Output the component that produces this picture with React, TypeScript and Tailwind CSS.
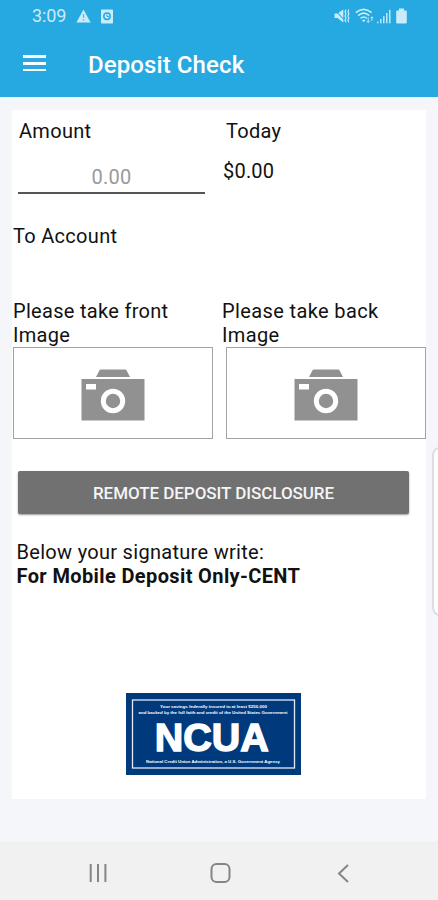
import React, { useState } from 'react'

function StatusBar() {
  return (
    <div className="flex h-8 items-center justify-between pl-8 pr-[31px] text-[#c9ecfb]">
      <div className="flex items-center">
        <span className="w-[44px] text-[18px] leading-8 tracking-[-0.1px]">3:09</span>
        <svg width="15" height="14" viewBox="0 0 15 14" fill="currentColor">
          <path d="M7.5 0.5 14.6 13.5H0.4Z" />
          <path d="M6.8 5h1.5v4H6.8zM6.8 10.2h1.5v1.5H6.8z" fill="#5fbfe8" />
        </svg>
        <svg className="ml-[10px]" width="12" height="15" viewBox="0 0 12 15">
          <rect x="0" y="0.5" width="12" height="14" rx="0.8" fill="currentColor" />
          <circle cx="6" cy="7.3" r="3.2" fill="none" stroke="#25a9e0" strokeWidth="1.5" />
          <path d="M6 5.5v2h2" fill="none" stroke="#25a9e0" />
        </svg>
      </div>
      <div className="flex items-center">
        <svg width="16" height="16" viewBox="0 0 16 16" fill="none" stroke="currentColor">
          <path d="M0.5 5.5h3L9.3 1.5v13L3.5 10h-3Z" fill="currentColor" stroke="none" />
          <path d="M0.5 1.5 9.8 11.5" stroke="#25a9e0" strokeWidth="1.1" />
          <path d="m12 1.5-1 2.2 1 2.1-1 2.2 1 2.1-1 2.2 1 2M14.9 1.5l-1 2.2 1 2.1-1 2.2 1 2.1-1 2.2 1 2" strokeWidth="1.2" />
        </svg>
        <svg className="ml-[5px]" width="19" height="16" viewBox="0 0 19 16" fill="none" stroke="currentColor" strokeWidth="1.6">
          <path d="M0.8 4.6Q8.7-2 16.6 4.6M3.2 7.6Q8.7 2.8 14.2 7.6M5.6 10.4Q8.7 7.6 11.8 10.4" />
          <path d="M7 12.3q1.7-1.5 3.4 0l-1.7 2Z" fill="currentColor" stroke="none" />
          <path d="M13.2 9.5v5m-1.5-1.6 1.5 1.6 1.5-1.6M16.9 13V8.8m-1.2 1.4 1.2-1.4 1.2 1.4" strokeWidth="0.9" />
        </svg>
        <svg className="ml-[3px]" width="14" height="15" viewBox="0 0 14 15" fill="currentColor">
          <rect x="0.2" y="12.5" width="1.3" height="1.8" />
          <rect x="3.1" y="10" width="1.4" height="4.3" />
          <rect x="6.1" y="7.2" width="1.4" height="7.1" />
          <rect x="9.1" y="4" width="1.4" height="10.3" />
          <rect x="12.1" y="0.8" width="1.4" height="13.5" />
        </svg>
        <svg className="ml-[5px]" width="11" height="16" viewBox="0 0 11 16" fill="currentColor">
          <path d="M3 0.5h5v2h1.8q1 0 1 1V14.5q0 1-1 1H1.2q-1 0-1-1V3.5q0-1 1-1H3Z" />
        </svg>
      </div>
    </div>
  )
}

function CameraBox() {
  return (
    <button className="flex h-[92px] w-[200px] items-center justify-center border border-[#a3a3a3] bg-white">
      <svg className="mt-[3px]" width="64" height="52" viewBox="0 0 64 52">
        <path d="M20 0.5h24q1 0 1.6 1L49 8H15l3.4-6.5q0.6-1 1.6-1Z" fill="#919191" />
        <rect x="0.5" y="10" width="63" height="41.5" fill="#919191" />
        <rect x="5" y="15" width="10" height="5.5" fill="#fff" />
        <circle cx="32" cy="32" r="9.7" fill="none" stroke="#fff" strokeWidth="5" />
      </svg>
    </button>
  )
}

function NcuaLogo() {
  return (
    <svg width="175" height="82" viewBox="0 0 175 82" className="font-['Liberation_Sans',sans-serif] tracking-normal">
      <rect width="175" height="82" fill="#003a7d" />
      <rect x="6.5" y="7" width="162" height="68" fill="none" stroke="#e3ebf5" strokeWidth="1.3" />
      <g fill="#fff" fontWeight="bold">
        <g fontSize="4.3">
          <text x="34" y="15" textLength="107" lengthAdjust="spacingAndGlyphs">Your savings federally insured to at least $250,000</text>
          <text x="12.5" y="21.2" textLength="149" lengthAdjust="spacingAndGlyphs">and backed by the full faith and credit of the United States Government</text>
          <text x="20" y="69.7" textLength="134" lengthAdjust="spacingAndGlyphs">National Credit Union Administration, a U.S. Government Agency</text>
        </g>
        <text x="28.8" y="57.7" fontSize="38" textLength="114" lengthAdjust="spacingAndGlyphs" stroke="#fff" strokeWidth="1.4">NCUA</text>
      </g>
    </svg>
  )
}

export default function App() {
  const [amount, setAmount] = useState("")
  return (
    <div className="relative flex h-[900px] w-[438px] flex-col overflow-hidden bg-[#f4f6fa] font-[Roboto,sans-serif] text-[20px] leading-6 tracking-[0.3px] text-[#111]">
      <header className="h-[97px] shrink-0 bg-[#25a9e0]">
        <StatusBar />
        <div className="flex h-[65px] items-center pl-[23px]">
          <button aria-label="Menu" className="flex w-[23px] flex-col gap-[4px] pb-[3px]">
            <span className="h-[3px] bg-white"></span>
            <span className="h-[3px] bg-white"></span>
            <span className="h-[2.5px] bg-white"></span>
          </button>
          <h1 className="ml-[42px] text-[24px] font-medium tracking-[0.1px] text-white">Deposit Check</h1>
        </div>
      </header>

      <main className="mx-3 mt-[13px] h-[689px] w-[414px] shrink-0 bg-white pt-[9px]">
        <div className="flex h-[105px]">
          <div className="w-[210px]">
            <div className="pl-[7px]">Amount</div>
            <input
              type="text"
              value={amount}
              onChange={(e) => setAmount(e.target.value)}
              className="ml-[6px] mt-[22px] block h-[29px] w-[187px] border-b-2 border-[#555] pb-[3px] text-center outline-none placeholder:text-[#999]"
              placeholder="0.00" />
          </div>
          <div>
            <div className="pl-1">Today</div>
            <div className="mt-4 pl-px tracking-[0.2px]">$0.00</div>
          </div>
        </div>
        <div className="h-[75px] pl-px">To Account</div>

        <div className="flex">
          <div className="w-[214px] pl-px">
            <p className="w-[170px]">Please take front Image</p>
            <CameraBox />
          </div>
          <div className="w-[200px]">
            <p className="-ml-[4px] w-[170px] tracking-[0.38px]">Please take back Image</p>
            <CameraBox />
          </div>
        </div>

        <button className="ml-[6px] mt-8 block h-[43px] w-[391px] rounded-[2px] bg-[#717171] text-[17px] font-medium tracking-[-0.05px] text-[#f5f5f5] shadow-[0_1px_2px_rgba(0,0,0,0.4)]">
          REMOTE DEPOSIT DISCLOSURE
        </button>

        <div className="mt-[26px] pl-[4.5px]">
          <p>Below your signature write:</p>
          <p className="font-bold tracking-[0.38px]">For Mobile Deposit Only-CENT</p>
        </div>

        <div className="mt-[105px] pl-[114px]">
          <NcuaLogo />
        </div>
      </main>

      {/* edge panel handle */}
      <div className="absolute left-[432px] top-[447px] h-[169px] w-5 rounded-[8px] border-2 border-[#dcdee2] bg-[#fdfdfe]"></div>

      <nav className="mt-auto flex h-[58px] shrink-0 items-center border-t border-[#ebedf0] bg-[#f1f1f1] pl-[88px] pt-[3px]">
        <svg width="20" height="20" viewBox="0 0 20 20" stroke="#858585" strokeWidth="2">
          <path d="M2.7 1v18M10 1v18M17.4 1v18" />
        </svg>
        <svg className="ml-[102px]" width="21" height="21" viewBox="0 0 21 21" fill="none" stroke="#858585" strokeWidth="2">
          <rect x="1.5" y="1" width="18" height="18" rx="5" />
        </svg>
        <svg className="ml-[106px]" width="12" height="19" viewBox="0 0 12 19" fill="none" stroke="#858585" strokeWidth="2">
          <path d="M11 1 2 9.5 11 18" />
        </svg>
      </nav>
    </div>
  )
}
